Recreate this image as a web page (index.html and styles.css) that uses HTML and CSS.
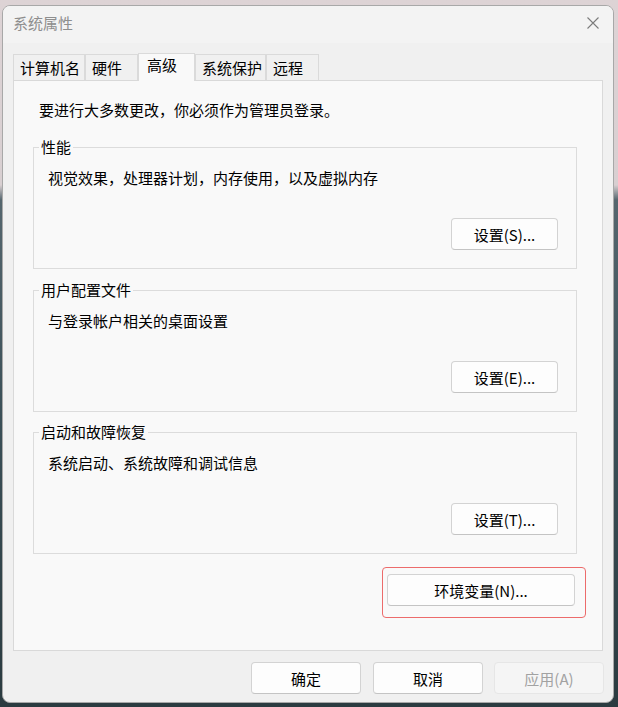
FILE: index.html
```html
<!DOCTYPE html>
<html lang="zh-CN">
<head>
  <meta charset="utf-8">
  <title>系统属性</title>
  <link rel="stylesheet" href="styles.css">
</head>
<body>
  <div class="window">
    <div class="titlebar">
      <span class="title">系统属性</span>
      <svg class="close" width="12" height="12" viewBox="0 0 12 12">
        <path d="M0.5 0.5 L11.5 11.5 M11.5 0.5 L0.5 11.5" stroke="#7c7c7c" stroke-width="1.1" fill="none"/>
      </svg>
    </div>

    <div class="body">
      <div class="tabs">
        <div class="tab first">计算机名</div>
        <div class="tab">硬件</div>
        <div class="tab selected">高级</div>
        <div class="tab">系统保护</div>
        <div class="tab">远程</div>
      </div>

      <div class="panel">
        <p class="intro">要进行大多数更改，你必须作为管理员登录。</p>

        <fieldset class="group">
          <legend>性能</legend>
          <p class="desc">视觉效果，处理器计划，内存使用，以及虚拟内存</p>
          <div class="group-actions"><button class="btn">设置(S)...</button></div>
        </fieldset>

        <fieldset class="group">
          <legend>用户配置文件</legend>
          <p class="desc">与登录帐户相关的桌面设置</p>
          <div class="group-actions"><button class="btn">设置(E)...</button></div>
        </fieldset>

        <fieldset class="group last">
          <legend>启动和故障恢复</legend>
          <p class="desc">系统启动、系统故障和调试信息</p>
          <div class="group-actions"><button class="btn">设置(T)...</button></div>
        </fieldset>

        <div class="env-row">
          <div class="highlight">
            <button class="btn env">环境变量(N)...</button>
          </div>
        </div>
      </div>

      <div class="footer">
        <button class="btn wide">确定</button>
        <button class="btn wide">取消</button>
        <button class="btn wide" disabled>应用(A)</button>
      </div>
    </div>
  </div>
</body>
</html>
```

FILE: styles.css
```css
html, body {
  margin: 0;
  height: 707px;
  overflow: hidden;
}

body {
  background: linear-gradient(to bottom, #ddd3d5 0, #d8cfd1 185px, #55666e 200px, #3a4f57 420px, #2b3b40 100%);
  font-family: "Noto Sans CJK SC", "Noto Sans", sans-serif;
  font-size: 15px;
  color: #000;
}

.window {
  box-sizing: border-box;
  margin: 5px 0 0 2px;
  width: 612px;
  height: 698px;
  border: 1px solid #a8a8a8;
  border-radius: 8px;
  background: #f0f0f0;
  overflow: hidden;
  display: flex;
  flex-direction: column;
}

.titlebar {
  height: 37px;
  background: #f3f3f3;
  display: flex;
  align-items: flex-start;
  justify-content: space-between;
  padding: 7px 14px 0 10px;
  box-sizing: border-box;
}

.title {
  line-height: 20px;
  color: #8e8e8e;
}

.close {
  margin-top: 4px;
}

.body {
  padding: 10px 10px 0 10px;
}

/* tabs */
.tabs {
  display: flex;
  align-items: flex-end;
}

.tab {
  box-sizing: border-box;
  height: 26px;
  min-width: 53px;
  padding: 0 3px 0 6px;
  line-height: 26px;
  border: 1px solid #dadada;
  border-bottom: none;
  background: #f0f0f0;
  white-space: nowrap;
}

.tab.first {
  padding-right: 4px;
}

.tab.selected {
  height: 28px;
  min-width: 57px;
  margin-bottom: -1px;
  padding-left: 8px;
  line-height: 22px;
  background: #f9f9f9;
  position: relative;
  z-index: 1;
}

/* page */
.panel {
  box-sizing: border-box;
  height: 571px;
  border: 1px solid #d9d9d9;
  background: #f9f9f9;
  padding: 19px 16px 0 19px;
}

.intro {
  margin: 0 0 0 6px;
  line-height: 20px;
}

.group {
  margin: 11px 9px 0 0;
  padding: 0 18px 18px 14px;
  border: 1px solid #dcdcdc;
  min-width: 0;
}

.intro + .group {
  margin-top: 17px;
}

.group.last {
  margin-top: 10px;
}

.group legend {
  margin-left: -9px;
  padding: 0 2px;
  line-height: 20px;
}

.desc {
  margin: 11px 0 0 0;
  line-height: 20px;
}

.group-actions {
  display: flex;
  justify-content: flex-end;
  margin-top: 30px;
}

.btn {
  box-sizing: border-box;
  width: 107px;
  height: 32px;
  padding: 0;
  font-family: inherit;
  font-size: 15px;
  color: #000;
  background: #fdfdfd;
  border: 1px solid #d3d3d3;
  border-bottom-color: #c4c4c4;
  border-radius: 4px;
}

.btn:disabled {
  color: #a2a2a2;
  background: #f5f5f5;
  border-color: #e6e6e6;
}

.env-row {
  display: flex;
  justify-content: flex-end;
  margin-top: 13px;
}

.highlight {
  border: 1px solid #ec6b6b;
  border-radius: 4px;
  padding: 6px 10px 11px 4px;
}

.btn.env {
  width: 188px;
}

/* dialog buttons */
.footer {
  display: flex;
  justify-content: flex-end;
  gap: 11px;
  margin: 11px -1px 0 0;
}

.footer .btn:first-child {
  margin-right: 1px;
}

.btn.wide {
  width: 110px;
}
```
